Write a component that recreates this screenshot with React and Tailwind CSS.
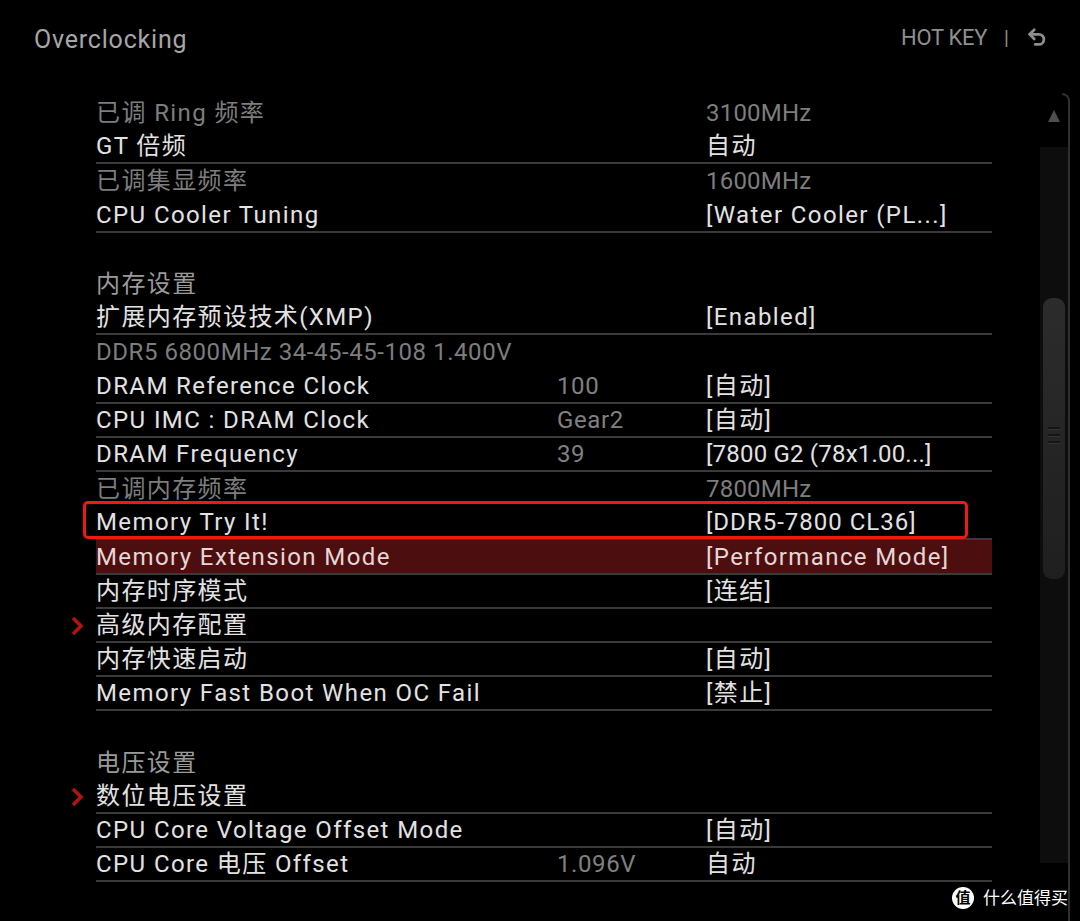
import React from 'react';

// numeric values are set tighter, the BIOS font has narrow digits
const rows = [
    { label: '已调 Ring 频率', right: '3100MHz', dim: true, numRight: true },
    { label: 'GT 倍频', right: '自动' },
    { label: '已调集显频率', right: '1600MHz', dim: true, numRight: true },
    { label: 'CPU Cooler Tuning', right: '[Water Cooler (PL...]' },
    { blank: true },
    { header: '内存设置' },
    { label: '扩展内存预设技术(XMP)', right: '[Enabled]' },
    { label: 'DDR5 6800MHz 34-45-45-108 1.400V', dim: true, numLabel: true },
    { label: 'DRAM Reference Clock', mid: '100', right: '[自动]' },
    { label: 'CPU IMC : DRAM Clock', mid: 'Gear2', right: '[自动]' },
    { label: 'DRAM Frequency', mid: '39', right: '[7800 G2 (78x1.00...]', numRight: true },
    { label: '已调内存频率', right: '7800MHz', dim: true, numRight: true },
    { label: 'Memory Try It!', right: '[DDR5-7800 CL36]', marked: true, semiRight: true },
    { label: 'Memory Extension Mode', right: '[Performance Mode]', active: true },
    { label: '内存时序模式', right: '[连结]' },
    { label: '高级内存配置', sub: true },
    { label: '内存快速启动', right: '[自动]' },
    { label: 'Memory Fast Boot When OC Fail', right: '[禁止]' },
    { blank: true },
    { header: '电压设置' },
    { label: '数位电压设置', sub: true },
    { label: 'CPU Core Voltage Offset Mode', right: '[自动]' },
    { label: 'CPU Core 电压 Offset', mid: '1.096V', right: '自动' },
];

const Chevron = () => (
    <svg width="14" height="20" viewBox="0 0 14 20">
        <polyline points="3,2 11,10 3,18" fill="none" stroke="#b3140f" strokeWidth="3.5" />
    </svg>
);

const Row = ({ row }) => {
    if (row.blank) return <div className="h-[34.2px]" />;

    if (row.header) {
        return (
            <div className="h-[34.2px] flex">
                <div className="w-[30px]" />
                <div className="flex-1 flex items-center text-[#9a9a9a]">{row.header}</div>
            </div>
        );
    }

    const textColor = row.dim ? 'text-[#7d7d7d]' : row.active ? 'text-[#e6d6d6]' : 'text-[#e2e2e2]';
    const rightTracking = row.numRight ? 'tracking-[0.2px]' : row.semiRight ? 'tracking-[1px]' : '';

    return (
        <div className="h-[34.2px] flex">
            <div className="w-[30px] flex items-center justify-start pl-[4px]">
                {row.sub && <Chevron />}
            </div>
            <div
                className={`relative flex-1 flex items-center ${textColor} ${row.dim ? '' : 'border-b-2 border-[#3a3a3a]'} ${row.active ? 'bg-[#4d0e10]' : ''}`}
            >
                <div className={`w-[461px] whitespace-nowrap ${row.numLabel ? 'tracking-[0.55px]' : ''}`}>{row.label}</div>
                <div className="w-[149px] text-[#808080] whitespace-nowrap tracking-[0.6px]">{row.mid}</div>
                <div className={`flex-1 whitespace-nowrap ${rightTracking} ${row.dim ? 'text-[#7d7d7d]' : ''}`}>{row.right}</div>
                {row.marked && (
                    <div className="absolute top-[-5px] bottom-[-1px] left-[-13px] right-[24px] border-[3px] border-[#ee1a10] rounded-[5px]" />
                )}
            </div>
        </div>
    );
};

const ScrollBar = () => (
    <div className="w-[30px] flex flex-col">
        <div className="h-[8px] flex justify-end">
            <div className="w-[8px] h-[8px] border-t-2 border-r-2 border-[#2f2f2f] rounded-tr-[8px]" />
        </div>
        <div className="flex-1 flex">
            <div className="flex-1 flex flex-col">
                <div className="h-[46px] flex justify-center pt-[9px]">
                    <div className="w-0 h-0 border-l-[6px] border-r-[6px] border-b-[12px] border-l-transparent border-r-transparent border-b-[#4e4e4e]" />
                </div>
                <div className="h-[716px] bg-[#0d0d0d] pt-[151px]">
                    <div className="mx-[3px] h-[281px] rounded-[9px] bg-gradient-to-b from-[#2c2c2c] to-[#1f1f1f] flex flex-col items-center justify-center gap-[4px] pb-[6px]">
                        <div className="w-[12px] h-[3px] bg-[#161616] border-b border-[#333]" />
                        <div className="w-[12px] h-[3px] bg-[#161616] border-b border-[#333]" />
                        <div className="w-[12px] h-[3px] bg-[#161616] border-b border-[#333]" />
                    </div>
                </div>
            </div>
            <div className="w-[2px] bg-[#2f2f2f]" />
        </div>
    </div>
);

const App = () => {
    return (
        <div
            className="relative w-[1080px] h-[921px] bg-black overflow-hidden flex flex-col"
            style={{ fontFamily: 'Roboto, "Noto Sans CJK SC", sans-serif' }}
        >
            {/* Top bar */}
            <div className="h-[93px] flex justify-between pl-[34px] pr-[32px]">
                <div className="pt-[25px] text-[25px] leading-[30px] tracking-[0.8px] text-[#a6a6a6]">Overclocking</div>
                <div className="pt-[26px] flex items-start gap-[17px] text-[#8f8f8f]">
                    <span className="text-[22px] leading-[24px] tracking-[-0.3px]">HOT KEY</span>
                    <span className="text-[20px] leading-[24px]">|</span>
                    <svg width="22" height="22" viewBox="0 0 24 24" fill="none" stroke="#8f8f8f" strokeWidth="3" strokeLinecap="round" strokeLinejoin="round" className="mt-[1px]">
                        <path d="M9 13 4 8l5-5" />
                        <path d="M4 8h10a5.5 5.5 0 0 1 0 11h-4" />
                    </svg>
                </div>
            </div>

            {/* Settings list */}
            <div className="flex-1 flex">
                <div className="w-[66px]" />
                <div className="w-[926px] pt-[3px] text-[24px] leading-none tracking-[1.4px]">
                    {rows.map((row, i) => (
                        <Row key={i} row={row} />
                    ))}
                </div>
                <div className="w-[48px]" />
                <ScrollBar />
            </div>

            {/* Site badge */}
            <div className="absolute right-[12px] bottom-[12px] flex items-center gap-[9px]">
                <div className="w-[22px] h-[22px] rounded-full bg-white flex items-center justify-center text-black text-[15px] font-bold leading-none">
                    值
                </div>
                <span className="text-white text-[17px] leading-none">什么值得买</span>
            </div>
        </div>
    );
};

export default App;
